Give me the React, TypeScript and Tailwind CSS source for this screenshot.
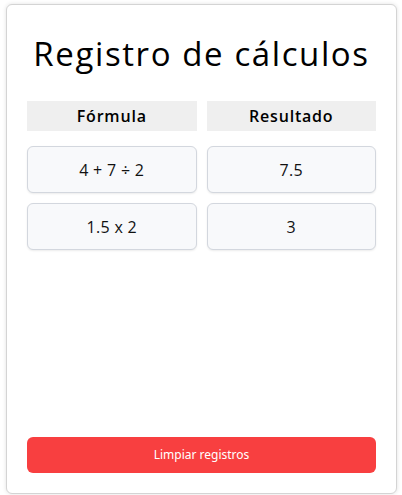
const rows = [
  { formula: "4 + 7 ÷ 2", result: "7.5" },
  { formula: "1.5 x 2", result: "3" },
];

export default function App() {
  return (
    <div className="h-[495px] w-[402px] bg-white pt-1">
      <div className="ml-[6px] flex h-[490px] w-[391px] flex-col rounded-md border border-[#d4d4d4] bg-white px-5 pb-5 shadow-[0_0_4px_rgba(0,0,0,0.12)] [font-family:'Open_Sans',sans-serif]">
        <h1 className="mt-[29px] text-center text-[33px] leading-[40px] font-medium tracking-[1.6px] text-black">
          Registro de cálculos
        </h1>

        <div className="mt-[27px] grid grid-cols-2 gap-[10px]">
          <div className="flex h-[30px] items-center justify-center bg-[#efefef] text-[16px] font-semibold tracking-[0.8px] text-black">
            Fórmula
          </div>
          <div className="flex h-[30px] items-center justify-center bg-[#efefef] text-[16px] font-semibold tracking-[0.8px] text-black">
            Resultado
          </div>
        </div>

        <div className="mt-[15px] grid grid-cols-2 gap-x-[10px] gap-y-[10px]">
          {rows.map((row) => (
            <>
              <div
                key={row.formula}
                className="flex h-[47px] items-center justify-center rounded-md border border-[#d3d7de] bg-[#f8f9fb] text-[16px] tracking-[0.3px] text-[#111] shadow-[0_1px_2px_rgba(0,0,0,0.08)]"
              >
                {row.formula}
              </div>
              <div
                key={row.result}
                className="flex h-[47px] items-center justify-center rounded-md border border-[#d3d7de] bg-[#f8f9fb] text-[16px] tracking-[0.3px] text-[#111] shadow-[0_1px_2px_rgba(0,0,0,0.08)]"
              >
                {row.result}
              </div>
            </>
          ))}
        </div>

        <button className="mt-auto h-9 w-full rounded-md bg-[#f83f40] text-[12px] text-white [font-family:'Noto_Sans',sans-serif]">
          Limpiar registros
        </button>
      </div>
    </div>
  );
}
